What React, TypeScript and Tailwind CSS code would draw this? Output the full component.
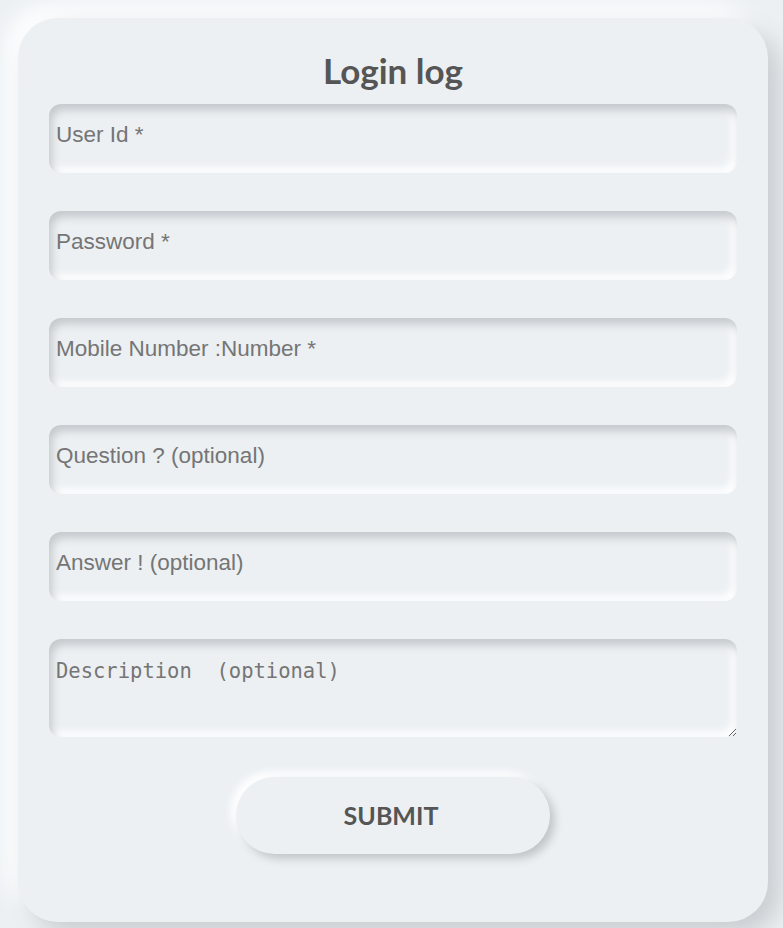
import React from "react";

const inputCls =
  "block w-full h-[69px] rounded-[12px] bg-[#ecf0f3] pl-[7px] pr-3 pt-0 pb-2 text-[22.5px] text-[#555] placeholder:text-[#757575] outline-none border-0 shadow-[inset_3px_6px_9px_#c5c9cd,inset_-5px_-5px_9px_#ffffff]";

export default function App() {
  const fields = [
    "User Id *",
    "Password *",
    "Mobile Number :Number *",
    "Question ? (optional)",
    "Answer ! (optional)",
  ];
  return (
    <div className="min-h-screen w-full bg-[#ecf0f3] pt-[18px] pl-[18px] pr-[15px] pb-[6px]">
      <div className="w-[750px] h-[904px] rounded-[40px] bg-[#ecf0f3] shadow-[12px_12px_24px_#c9cdd1,-12px_-12px_24px_#ffffff] px-[31px] pt-[31px] flex flex-col">
        <h1
          className="text-center text-[35px] font-bold text-[#555] leading-[42px]"
          style={{ fontFamily: "Lato, 'Noto Sans', sans-serif" }}
        >
          Login log
        </h1>
        <form
          className="mt-[13px] flex flex-col gap-[38px]"
          onSubmit={(e) => e.preventDefault()}
        >
          {fields.map((f) => (
            <input
              key={f}
              type="text"
              placeholder={f}
              className={inputCls}
              style={{ fontFamily: "'Liberation Sans', Arial, sans-serif" }}
            />
          ))}
          <textarea
            placeholder="Description  (optional)"
            className="block w-full h-[98px] rounded-[12px] bg-[#ecf0f3] pl-[7px] pr-3 pt-[21px] text-[20.5px] leading-[1.15] text-[#555] placeholder:text-[#757575] outline-none border-0 shadow-[inset_3px_6px_9px_#c5c9cd,inset_-5px_-5px_9px_#ffffff]"
            style={{ fontFamily: "'DejaVu Sans Mono', 'Liberation Mono', monospace" }}
          />
        </form>
        <div className="mt-[40px] flex justify-center">
          <button
            type="button"
            className="w-[314px] h-[77px] rounded-full bg-[#ecf0f3] pr-[4px] text-[25px] font-bold text-[#555] shadow-[5px_5px_9px_#c2c6ca,-5px_-5px_9px_#ffffff]"
            style={{ fontFamily: "Lato, 'Noto Sans', sans-serif" }}
          >
            SUBMIT
          </button>
        </div>
      </div>
    </div>
  );
}
